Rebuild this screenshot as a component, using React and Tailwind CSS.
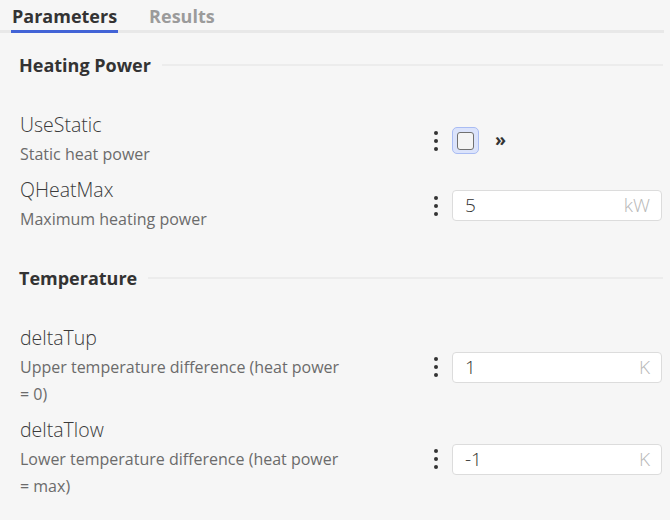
import React from "react"

const SECTIONS = [
  {
    title: "Heating Power",
    params: [
      { name: "UseStatic", description: "Static heat power", type: "bool" },
      { name: "QHeatMax", description: "Maximum heating power", value: "5", unit: "kW" },
    ],
  },
  {
    title: "Temperature",
    params: [
      { name: "deltaTup", description: "Upper temperature difference (heat power = 0)", value: "1", unit: "K" },
      { name: "deltaTlow", description: "Lower temperature difference (heat power = max)", value: "-1", unit: "K" },
    ],
  },
]

function MenuDots() {
  return (
    <div className="w-4 flex flex-col items-center gap-[4px] shrink-0">
      <span className="w-[4px] h-[4px] rounded-full bg-[#333]" />
      <span className="w-[4px] h-[4px] rounded-full bg-[#333]" />
      <span className="w-[4px] h-[4px] rounded-full bg-[#333]" />
    </div>
  )
}

function BoolControl() {
  return (
    <div className="flex items-center">
      <span className="w-[27px] h-[27px] rounded-[5px] border border-[#a9bcf3] bg-[#dbe3fb] flex items-center justify-center">
        <span className="w-[17px] h-[18px] rounded-[3px] border-[1.5px] border-[#707070] bg-[#f4f4f4]" />
      </span>
      <span className="ml-[16px] text-[18px] leading-none font-bold text-[#333] -mt-[3px]">»</span>
    </div>
  )
}

function NumberControl({ value, unit }) {
  return (
    <div className="w-[210px] h-[31px] rounded-[4px] border border-[#dcdcdc] bg-white flex items-center justify-between pl-[12px] pr-[11px]">
      <span className="text-[19px] font-light text-[#333]">{value}</span>
      <span className="text-[19px] font-light text-[#b8b8b8]">{unit}</span>
    </div>
  )
}

function ParamRow({ param }) {
  return (
    <div className="flex items-center justify-between pl-[20px] pr-[8px]">
      <div className="max-w-[325px]">
        <div className="text-[19.5px] leading-[24px] font-light text-[#3a3a3a]">{param.name}</div>
        <div className="mt-[4px] text-[16px] leading-[27px] text-[#6b6b6b]">{param.description}</div>
      </div>
      <div className="w-[234px] flex items-center gap-[8px]">
        <MenuDots />
        {param.type === "bool" ? <BoolControl /> : <NumberControl value={param.value} unit={param.unit} />}
      </div>
    </div>
  )
}

function Section({ section, first }) {
  return (
    <section className={first ? "mt-[20px]" : "mt-[33px]"}>
      <div className="flex items-center gap-[11px] pl-[19px] pr-[7px]">
        <h3 className="text-[18px] leading-[24px] font-bold text-[#333]">{section.title}</h3>
        <div className="flex-1 h-[2px] bg-[#ececec]" />
      </div>
      <div className="mt-[36px] flex flex-col gap-[10px]">
        {section.params.map((p) => (
          <ParamRow key={p.name} param={p} />
        ))}
      </div>
    </section>
  )
}

export default function App() {
  return (
    <div
      className="w-[670px] h-[520px] overflow-hidden bg-[#f6f6f6]"
      style={{ fontFamily: '"Open Sans", sans-serif' }}
    >
      {/* tab bar */}
      <div className="flex gap-[31px] pl-[11px] mr-[6px] border-b-[3px] border-[#e8e8e8] h-[33px]">
        <div className="pt-[3px] text-[18px] leading-[27px] font-bold text-[#333] border-b-[3px] border-[#4263d6] -mb-[3px] px-[1px]">
          Parameters
        </div>
        <div className="pt-[3px] text-[18px] leading-[27px] font-bold text-[#9b9b9b]">Results</div>
      </div>

      {SECTIONS.map((s, i) => (
        <Section key={s.title} section={s} first={i === 0} />
      ))}
    </div>
  )
}
